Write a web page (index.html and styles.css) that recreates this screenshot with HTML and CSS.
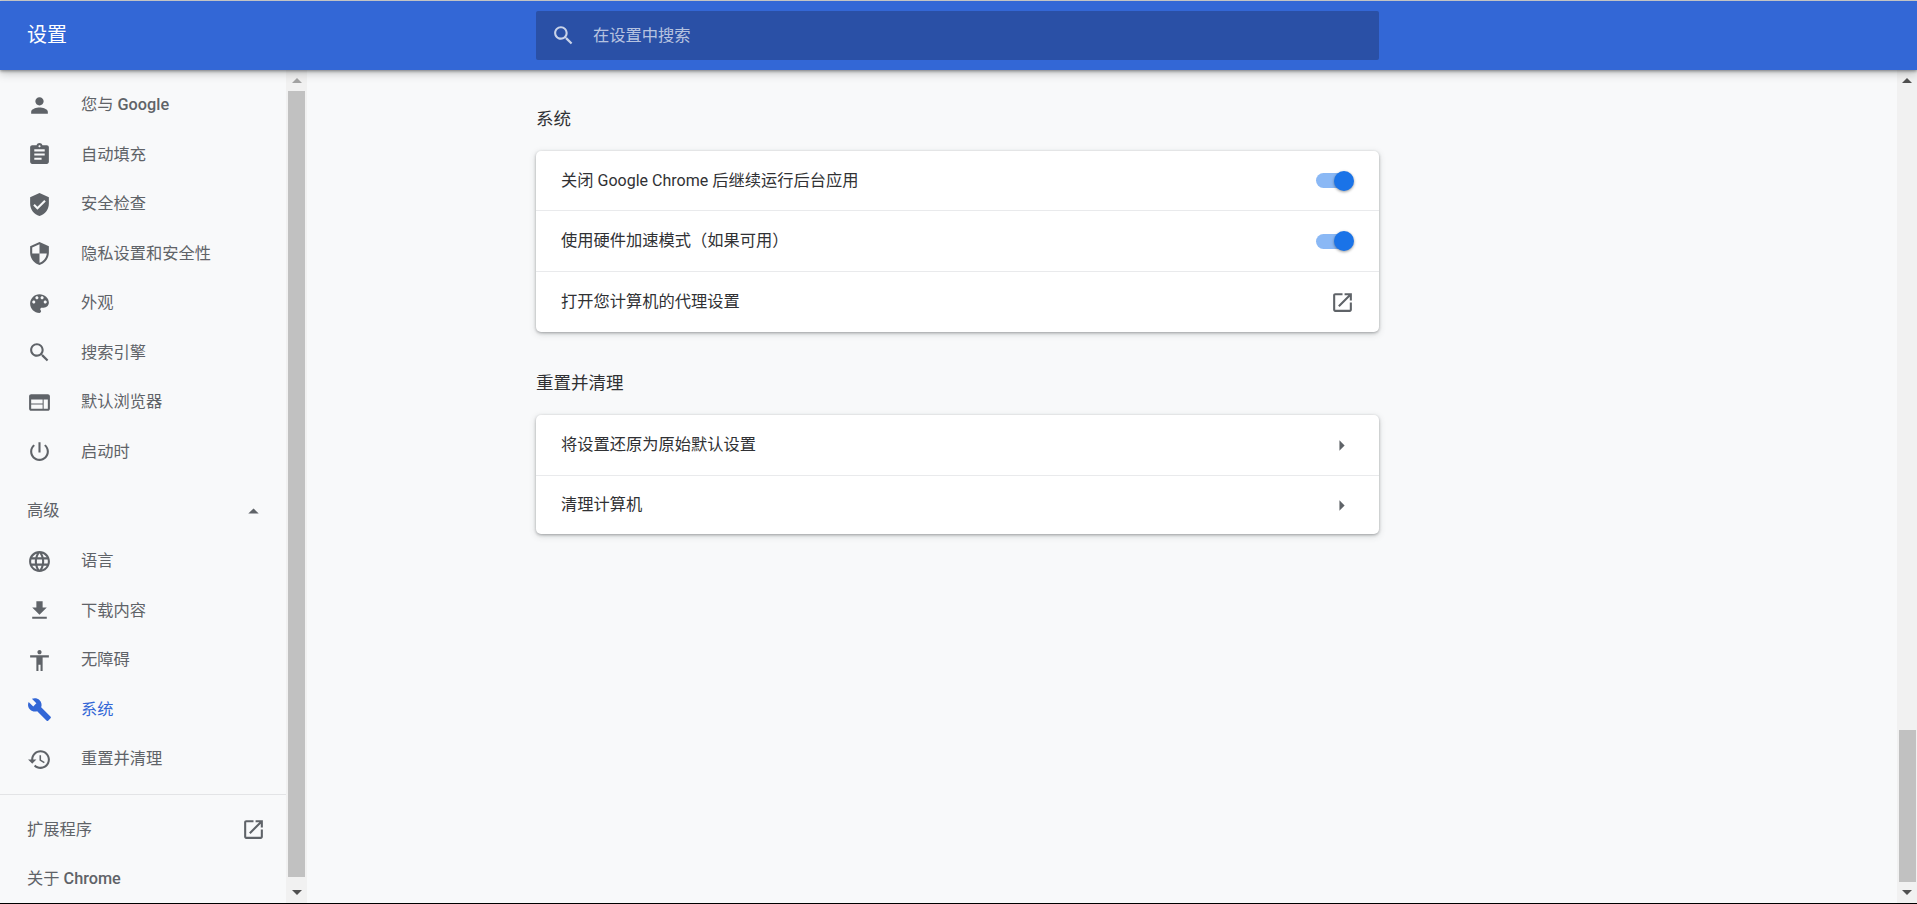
FILE: index.html
```html
<!DOCTYPE html>
<html lang="zh-CN">
<head>
<meta charset="utf-8">
<title>设置</title>
<link rel="stylesheet" href="styles.css">
</head>
<body>
<div class="app">
  <header class="topbar">
    <h1 class="topbar-title">设置</h1>
    <div class="search">
      <svg class="icon search-icon" viewBox="0 0 24 24"><path d="M15.5 14h-.79l-.28-.27C15.41 12.59 16 11.11 16 9.5 16 5.91 13.09 3 9.5 3S3 5.91 3 9.5 5.91 16 9.5 16c1.61 0 3.09-.59 4.23-1.57l.27.28v.79l5 4.99L20.49 19l-4.99-5zm-6 0C7.01 14 5 11.99 5 9.5S7.01 5 9.5 5 14 7.01 14 9.5 11.99 14 9.5 14z"/></svg>
      <span class="search-text label">在设置中搜索</span>
    </div>
  </header>
  <div class="body">
    <nav class="sidebar">
      <ul class="nav-list">
        <li class="nav-item"><svg class="icon" viewBox="0 0 24 24"><path d="M12 12c2.21 0 4-1.79 4-4s-1.79-4-4-4-4 1.79-4 4 1.79 4 4 4zm0 2c-2.67 0-8 1.34-8 4v2h16v-2c0-2.66-5.33-4-8-4z"/></svg><span class="label">您与 <b class="latin-strong">Google</b></span></li>
        <li class="nav-item"><svg class="icon" viewBox="0 0 24 24"><path d="M19 3h-4.18C14.4 1.84 13.3 1 12 1c-1.3 0-2.4.84-2.82 2H5c-1.1 0-2 .9-2 2v14c0 1.1.9 2 2 2h14c1.1 0 2-.9 2-2V5c0-1.1-.9-2-2-2zm-7 0c.55 0 1 .45 1 1s-.45 1-1 1-1-.45-1-1 .45-1 1-1zm2 14H7v-2h7v2zm3-4H7v-2h10v2zm0-4H7V7h10v2z"/></svg><span class="label">自动填充</span></li>
        <li class="nav-item"><svg class="icon" viewBox="0 0 24 24"><path d="M12 1L3 5v6c0 5.55 3.84 10.74 9 12 5.16-1.26 9-6.45 9-12V5l-9-4zm-2 16l-4-4 1.41-1.41L10 14.17l6.59-6.59L18 9l-8 8z"/></svg><span class="label">安全检查</span></li>
        <li class="nav-item"><svg class="icon" viewBox="0 0 24 24"><path d="M12 1L3 5v6c0 5.55 3.84 10.74 9 12 5.16-1.26 9-6.45 9-12V5l-9-4zm0 10.99h7c-.53 4.12-3.28 7.79-7 8.94V12H5V6.3l7-3.11v8.8z"/></svg><span class="label">隐私设置和安全性</span></li>
        <li class="nav-item"><svg class="icon" viewBox="0 0 24 24"><path d="M12 3c-4.97 0-9 4.03-9 9s4.03 9 9 9c.83 0 1.5-.67 1.5-1.5 0-.39-.15-.74-.39-1.01-.23-.26-.38-.61-.38-.99 0-.83.67-1.5 1.5-1.5H16c2.76 0 5-2.24 5-5 0-4.42-4.03-8-9-8zm-5.5 9c-.83 0-1.5-.67-1.5-1.5S5.67 9 6.5 9 8 9.67 8 10.5 7.33 12 6.5 12zm3-4C8.67 8 8 7.33 8 6.5S8.67 5 9.5 5s1.5.67 1.5 1.5S10.33 8 9.5 8zm5 0c-.83 0-1.5-.67-1.5-1.5S13.67 5 14.5 5s1.5.67 1.5 1.5S15.33 8 14.5 8zm3 4c-.83 0-1.5-.67-1.5-1.5S16.67 9 17.5 9s1.5.67 1.5 1.5-.67 1.5-1.5 1.5z"/></svg><span class="label">外观</span></li>
        <li class="nav-item"><svg class="icon" viewBox="0 0 24 24"><path d="M15.5 14h-.79l-.28-.27C15.41 12.59 16 11.11 16 9.5 16 5.91 13.09 3 9.5 3S3 5.91 3 9.5 5.91 16 9.5 16c1.61 0 3.09-.59 4.23-1.57l.27.28v.79l5 4.99L20.49 19l-4.99-5zm-6 0C7.01 14 5 11.99 5 9.5S7.01 5 9.5 5 14 7.01 14 9.5 11.99 14 9.5 14z"/></svg><span class="label">搜索引擎</span></li>
        <li class="nav-item"><svg class="icon" viewBox="0 0 24 24"><path d="M20 4H4c-1.1 0-1.99.9-1.99 2L2 18c0 1.1.9 2 2 2h16c1.1 0 2-.9 2-2V6c0-1.1-.9-2-2-2zm-5 14H4v-4h11v4zm0-5H4V9h11v4zm5 5h-4V9h4v9z"/></svg><span class="label">默认浏览器</span></li>
        <li class="nav-item"><svg class="icon" viewBox="0 0 24 24"><path d="M13 3h-2v10h2V3zm4.83 2.17l-1.42 1.42C17.99 7.86 19 9.81 19 12c0 3.87-3.13 7-7 7s-7-3.13-7-7c0-2.19 1.01-4.14 2.58-5.42L6.17 5.17C4.23 6.82 3 9.26 3 12c0 4.97 4.03 9 9 9s9-4.03 9-9c0-2.74-1.23-5.18-3.17-6.83z"/></svg><span class="label">启动时</span></li>
      </ul>
      <div class="nav-advanced">
        <span class="label">高级</span>
        <svg class="icon" viewBox="0 0 24 24"><path d="M7 14l5-5 5 5z"/></svg>
      </div>
      <ul class="nav-list">
        <li class="nav-item"><svg class="icon" viewBox="0 0 24 24"><path d="M11.99 2C6.47 2 2 6.48 2 12s4.47 10 9.99 10C17.52 22 22 17.52 22 12S17.52 2 11.99 2zm6.93 6h-2.95c-.32-1.25-.78-2.45-1.38-3.56 1.84.63 3.37 1.91 4.33 3.56zM12 4.04c.83 1.2 1.48 2.53 1.91 3.96h-3.82c.43-1.43 1.08-2.76 1.91-3.96zM4.26 14C4.1 13.36 4 12.69 4 12s.1-1.36.26-2h3.38c-.08.66-.14 1.32-.14 2 0 .68.06 1.34.14 2H4.26zm.82 2h2.95c.32 1.25.78 2.45 1.38 3.56-1.84-.63-3.37-1.9-4.33-3.56zm2.95-8H5.08c.96-1.66 2.49-2.93 4.33-3.56C8.81 5.55 8.35 6.75 8.03 8zM12 19.96c-.83-1.2-1.48-2.53-1.91-3.96h3.82c-.43 1.43-1.08 2.76-1.91 3.96zM14.34 14H9.66c-.09-.66-.16-1.32-.16-2 0-.68.07-1.35.16-2h4.68c.09.65.16 1.32.16 2 0 .68-.07 1.34-.16 2zm.25 5.56c.6-1.11 1.06-2.31 1.38-3.56h2.95c-.96 1.65-2.49 2.93-4.33 3.56zM16.36 14c.08-.66.14-1.32.14-2 0-.68-.06-1.34-.14-2h3.38c.16.64.26 1.31.26 2s-.1 1.36-.26 2h-3.38z"/></svg><span class="label">语言</span></li>
        <li class="nav-item"><svg class="icon" viewBox="0 0 24 24"><path d="M19 9h-4V3H9v6H5l7 7 7-7zM5 18v2h14v-2H5z"/></svg><span class="label">下载内容</span></li>
        <li class="nav-item"><svg class="icon" viewBox="0 0 24 24"><path d="M12 2c1.1 0 2 .9 2 2s-.9 2-2 2-2-.9-2-2 .9-2 2-2zm9 7h-6v13h-2v-6h-2v6H9V9H3V7h18v2z"/></svg><span class="label">无障碍</span></li>
        <li class="nav-item is-active"><svg class="icon" viewBox="0 0 24 24"><path d="M22.7 19l-9.1-9.1c.9-2.3.4-5-1.5-6.9-2-2-5-2.4-7.4-1.3L9 6 6 9 1.6 4.7C.4 7.1.9 10.1 2.9 12.1c1.9 1.9 4.6 2.4 6.9 1.5l9.1 9.1c.4.4 1 .4 1.4 0l2.3-2.3c.5-.4.5-1.1.1-1.4z"/></svg><span class="label">系统</span></li>
        <li class="nav-item"><svg class="icon" viewBox="0 0 24 24"><path d="M13 3c-4.97 0-9 4.03-9 9H1l3.89 3.89.07.14L9 12H6c0-3.87 3.13-7 7-7s7 3.13 7 7-3.13 7-7 7c-1.93 0-3.68-.79-4.94-2.06l-1.42 1.42C8.27 19.99 10.51 21 13 21c4.97 0 9-4.03 9-9s-4.03-9-9-9zm-1 5v5l4.28 2.54.72-1.21-3.5-2.08V8H12z"/></svg><span class="label">重置并清理</span></li>
      </ul>
      <div class="nav-divider"></div>
      <div class="nav-plain">
        <span class="label">扩展程序</span>
        <svg class="icon" viewBox="0 0 24 24"><path d="M19 19H5V5h7V3H5c-1.11 0-2 .9-2 2v14c0 1.1.89 2 2 2h14c1.1 0 2-.9 2-2v-7h-2v7zM14 3v2h3.59l-9.83 9.83 1.41 1.41L19 6.41V10h2V3h-7z"/></svg>
      </div>
      <div class="nav-plain"><span class="label">关于 <b class="latin-strong">Chrome</b></span></div>
    </nav>
    <div class="scrollbar scrollbar-nav">
      <div class="scroll-arrow"><i class="tri-up"></i></div>
      <div class="scroll-thumb"></div>
      <div class="scroll-arrow scroll-arrow-end"><i class="tri-down"></i></div>
    </div>
    <main class="content">
      <section class="section">
        <h2 class="section-title">系统</h2>
        <div class="card card-system">
          <div class="row"><span class="label">关闭 <span class="latin">Google Chrome</span> 后继续运行后台应用</span><div class="toggle"><i class="knob"></i></div></div>
          <div class="row"><span class="label">使用硬件加速模式（如果可用）</span><div class="toggle"><i class="knob"></i></div></div>
          <div class="row"><span class="label">打开您计算机的代理设置</span><svg class="icon" viewBox="0 0 24 24"><path d="M19 19H5V5h7V3H5c-1.11 0-2 .9-2 2v14c0 1.1.89 2 2 2h14c1.1 0 2-.9 2-2v-7h-2v7zM14 3v2h3.59l-9.83 9.83 1.41 1.41L19 6.41V10h2V3h-7z"/></svg></div>
        </div>
      </section>
      <section class="section">
        <h2 class="section-title">重置并清理</h2>
        <div class="card card-reset">
          <div class="row"><span class="label">将设置还原为原始默认设置</span><svg class="icon chevron" viewBox="0 0 24 24"><path d="M10 17l5-5-5-5v10z"/></svg></div>
          <div class="row"><span class="label">清理计算机</span><svg class="icon chevron" viewBox="0 0 24 24"><path d="M10 17l5-5-5-5v10z"/></svg></div>
        </div>
      </section>
    </main>
    <div class="scrollbar scrollbar-page">
      <div class="scroll-arrow"><i class="tri-up"></i></div>
      <div class="scroll-track"></div>
      <div class="scroll-thumb"></div>
      <div class="scroll-arrow"><i class="tri-down"></i></div>
    </div>
  </div>
</div>
</body>
</html>
```
FILE: styles.css
```css
* { box-sizing: border-box; }
html, body { margin: 0; height: 100%; overflow: hidden; }
body {
  font-family: Roboto, "Noto Sans CJK SC", sans-serif;
  font-size: 16.25px;
  color: #303134;
  background: #f8f9fa;
}
h1, h2, ul { margin: 0; padding: 0; font-weight: 400; }
ul { list-style: none; }
.app {
  height: 904px;
  display: flex;
  flex-direction: column;
  border-top: 1px solid #d9d9d9;
  border-bottom: 1px solid #000;
}
.icon { width: 25px; height: 25px; flex: none; fill: #5f6368; display: block; }
.label { padding-bottom: 4px; }
.latin-strong { font-weight: 500; }
.latin { font-size: 16px; }
.chevron { margin-right: 1px; }

.topbar {
  height: 69px;
  flex: none;
  display: grid;
  grid-template-columns: 536px 843px;
  align-items: center;
  background: #3367d6;
  box-shadow: 0 1px 3px rgba(60, 64, 67, .6), 0 4px 8px rgba(60, 64, 67, .25);
  position: relative;
  z-index: 2;
}
.topbar-title { font-size: 20px; color: #fff; padding: 0 0 4px 27px; }
.search {
  height: 49px;
  display: flex;
  align-items: center;
  gap: 17px;
  padding-left: 15px;
  border-radius: 2px;
  background: #2a50a6;
}
.search-icon { fill: rgba(255, 255, 255, .75); }
.search-text { color: rgba(255, 255, 255, .68); }

.body { flex: 1; min-height: 0; display: flex; }

.sidebar {
  width: 286px;
  flex: none;
  padding-top: 10.25px;
  color: #5f6368;
}
.nav-item {
  height: 49.5px;
  display: flex;
  align-items: center;
  gap: 29px;
  padding-left: 27px;
}
.nav-item.is-active { color: #3367d6; }
.is-active .icon { fill: #3367d6; }
.nav-advanced, .nav-plain {
  display: flex;
  align-items: center;
  justify-content: space-between;
  padding: 0 20px 0 27px;
}
.nav-advanced { height: 50px; margin-top: 10px; }
.nav-plain { height: 49.5px; }
.nav-divider { height: 1px; margin: 10px 0; background: #e3e4e6; }

.scrollbar {
  width: 20px;
  flex: none;
  display: flex;
  flex-direction: column;
  align-items: flex-end;
  background: #f1f1f1;
}
.scrollbar-nav { width: 21px; }
.scrollbar-nav .scroll-thumb { height: 786px; margin-right: 2px; }
.scrollbar-page { position: relative; z-index: 1; }
.scroll-arrow {
  width: 100%;
  height: 21px;
  display: flex;
  align-items: center;
  justify-content: center;
  flex: none;
}
.scroll-arrow-end { flex: 1; align-items: flex-end; padding-bottom: 8px; }
.scroll-thumb { width: 17px; flex: none; background: #c1c1c1; margin-right: 1px; }
.scrollbar-page .scroll-thumb { height: 152px; }
.scroll-track { flex: 1; }
.tri-up, .tri-down { width: 0; height: 0; border-left: 5px solid transparent; border-right: 5px solid transparent; }
.tri-up { border-bottom: 5px solid #505050; }
.tri-down { border-top: 5px solid #505050; }
.scrollbar-nav .tri-up { border-bottom-color: #a3a3a3; }

.content {
  flex: 1;
  min-width: 0;
  padding: 25px 0 0 229px;
}
.section { width: 843px; margin-bottom: 27px; }
.section-title {
  height: 48px;
  margin-bottom: 8px;
  padding-bottom: 4px;
  display: flex;
  align-items: center;
  font-size: 17.5px;
}
.card {
  background: #fff;
  border-radius: 5px;
  box-shadow: 0 1px 3px rgba(60, 64, 67, .4), 0 2px 7px rgba(60, 64, 67, .18);
}
.row {
  display: flex;
  align-items: center;
  justify-content: space-between;
  padding: 0 24px 0 25px;
}
.row + .row { border-top: 1px solid #e9eaec; }
.card-system .row { height: 61px; }
.card-system .row:first-child { height: 59px; }
.card-reset .row { height: 59px; }
.card-reset .row:first-child { height: 60px; }

.toggle {
  width: 36px;
  height: 15px;
  margin-right: 3px;
  border-radius: 8px;
  background: #8ab8f5;
  position: relative;
}
.knob {
  position: absolute;
  top: -2.5px;
  left: 18px;
  width: 20px;
  height: 20px;
  border-radius: 50%;
  background: #1a73e8;
  box-shadow: 0 1px 3px rgba(0, 0, 0, .4);
}
```
